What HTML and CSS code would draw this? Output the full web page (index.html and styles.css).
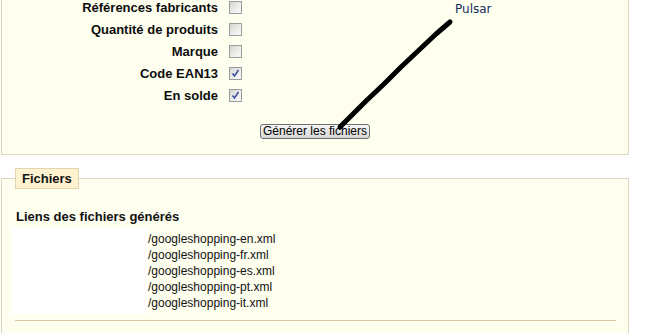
FILE: index.html
```html
<!DOCTYPE html>
<html lang="fr">
<head>
  <meta charset="UTF-8" />
  <meta name="viewport" content="width=device-width, initial-scale=1.0"/>
  <title>Google Shopping - export</title>
  <link rel="stylesheet" href="styles.css">
</head>
<body>
  <div class="wrap">
    <fieldset class="box options">
      <div class="opts">
        <div class="opt"><span class="lbl">Références fabricants</span><span class="cb"></span></div>
        <div class="opt"><span class="lbl">Quantité de produits</span><span class="cb"></span></div>
        <div class="opt"><span class="lbl">Marque</span><span class="cb"></span></div>
        <div class="opt"><span class="lbl">Code EAN13</span><span class="cb"><svg width="11" height="11" viewBox="0 0 11 11"><path d="M2.5,5.5 L4.5,8 L8.5,2" fill="none" stroke="#3e51a6" stroke-width="1.6"/></svg></span></div>
        <div class="opt"><span class="lbl">En solde</span><span class="cb"><svg width="11" height="11" viewBox="0 0 11 11"><path d="M2.5,5.5 L4.5,8 L8.5,2" fill="none" stroke="#3e51a6" stroke-width="1.6"/></svg></span></div>
      </div>
      <div class="actions">
        <button class="btn">Générer les fichiers</button>
      </div>
    </fieldset>

    <fieldset class="box files">
      <legend>Fichiers</legend>
      <h4>Liens des fichiers générés</h4>
      <div class="filerow">
        <div class="blank"></div>
        <ul class="filelist">
          <li>/googleshopping-en.xml</li>
          <li>/googleshopping-fr.xml</li>
          <li>/googleshopping-es.xml</li>
          <li>/googleshopping-pt.xml</li>
          <li>/googleshopping-it.xml</li>
        </ul>
      </div>
      <hr>
    </fieldset>

    <!-- annotation on top of the screenshot -->
    <div class="note">Pulsar</div>
    <svg class="scribble" width="650" height="333" viewBox="0 0 650 333">
      <path d="M450,22 L436,34 L418,51 L401,67 L384,84 L366,101 L352,115 L340,127" fill="none" stroke="#000" stroke-width="5" stroke-linecap="round" stroke-linejoin="round"/>
    </svg>
  </div>
</body>
</html>
```

FILE: styles.css
```css
html, body {
  margin: 0;
  padding: 0;
  background: #fff;
  font-family: "Liberation Sans", Arial, sans-serif;
  color: #111;
  overflow: hidden;
}

.wrap {
  position: relative;
  display: flow-root;
  width: 650px;
  height: 333px;
  padding-left: 1px;
  box-sizing: border-box;
}

.box {
  width: 628px;
  box-sizing: border-box;
  margin: 0;
  min-inline-size: 0;
  background: #fffff0;
  border: 1px solid #ddd5c1;
}

/* options */
.options {
  margin-top: -12px;
  padding: 7px 0 15px 0;
}

.opts {
  display: flex;
  flex-direction: column;
}

.opt {
  display: grid;
  grid-template-columns: 216px 13px;
  column-gap: 11px;
  align-items: center;
  height: 22px;
}

.lbl {
  text-align: right;
  font-size: 13px;
  font-weight: bold;
  line-height: 15px;
  color: #0d0d0d;
}

.cb {
  display: block;
  width: 13px;
  height: 13px;
  box-sizing: border-box;
  border: 1px solid #9c9c9c;
  background: linear-gradient(135deg, #d4d4cf 0%, #ececea 55%, #fbfbfb 100%);
}

.cb svg {
  display: block;
}

.actions {
  display: flex;
  justify-content: center;
  margin-top: 18px;
}

.btn {
  font-family: "Liberation Sans", Arial, sans-serif;
  font-size: 12px;
  line-height: 13px;
  height: 15px;
  padding: 0 2px;
  color: #000;
  border: 1px solid #6f6f6f;
  border-radius: 3px;
  background: linear-gradient(#f6f6f6, #e3e3e3 60%, #d6d6d6);
}

/* files */
.files {
  margin-top: 13px;
  padding: 0 9px 20px 9px;
}

.files legend {
  margin-left: 4px;
  padding: 2px 6px;
  border: 1px solid #e2d3b3;
  background: #fff3cf;
  font-size: 13px;
  font-weight: bold;
  line-height: 15px;
}

.files h4 {
  margin: 20px 0 3px 5px;
  font-size: 13px;
  line-height: 15px;
}

.filerow {
  display: flex;
}

.blank {
  width: 137px;
  height: 87px;
  background: #fff;
}

.filelist {
  list-style: none;
  margin: 0;
  padding: 4px 0 0 0;
  font-size: 12px;
  line-height: 16px;
}

.files hr {
  border: 0;
  border-top: 1px solid #d8c8a8;
  height: 0;
  margin: 6px 3px 0 4px;
}

/* annotation */
.note {
  position: absolute;
  left: 455px;
  top: 2px;
  font-family: "DejaVu Sans", Verdana, sans-serif;
  font-size: 12px;
  line-height: 14px;
  color: #12305c;
}

.scribble {
  position: absolute;
  left: 0;
  top: 0;
  pointer-events: none;
}
```
